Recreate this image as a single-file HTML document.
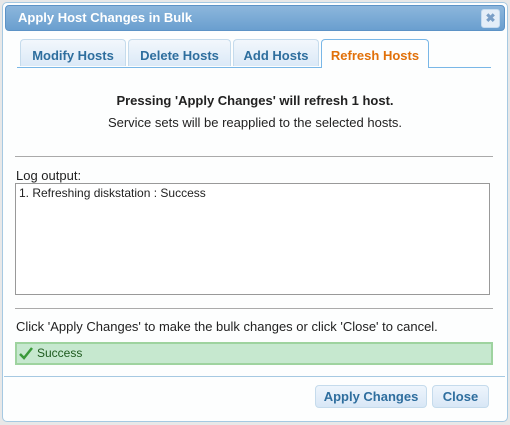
<!DOCTYPE html>
<html><head><style>
body{margin:0;width:510px;height:425px;background:#e8e8e8;font-family:"Liberation Sans",sans-serif;font-size:13px;color:#222;position:relative;overflow:hidden}
.dlg{position:absolute;left:2px;top:2px;width:504px;height:418px;background:#fdfefe;border:1px solid #a6c9e2;border-radius:5px}
.title{position:absolute;left:2px;top:2px;width:498px;height:24px;background:linear-gradient(#8cb6dc,#6a9fcf);border:1px solid #5d93c6;border-radius:4px;color:#fff;font-weight:bold;font-size:13px;line-height:24px;text-indent:12px}
.x{position:absolute;left:475px;top:3px;width:17px;height:17px;background:#e4eef8;border:1px solid #c5dbef;border-radius:3px;color:#7a9fc7;font-size:12px;line-height:17px;text-align:center;text-indent:0;font-weight:bold}
.tab{position:absolute;top:39px;height:27px;border:1px solid #c5dbec;border-bottom:none;border-radius:4px 4px 0 0;background:linear-gradient(#f2f7fc,#dbe9f7);color:#2e6e9e;font-weight:bold;font-size:13px;line-height:31px;text-align:center;box-sizing:border-box}
.tab.on{background:#fdfefe;color:#e17009;border-color:#79b7e7;height:29px}
.tl{position:absolute;left:17px;top:67px;width:474px;height:1px;background:#79b7e7}
.hr{position:absolute;left:15px;width:478px;height:1px;background:#aaa}
.t{position:absolute;white-space:nowrap}
.ta{position:absolute;left:15px;top:183px;width:475px;height:112px;border:1px solid #999;background:#fff;font-size:12px;padding:2px 3px;box-sizing:border-box}
.ok{position:absolute;left:15px;top:342px;width:478px;height:23px;box-sizing:border-box;background:#c6e8cf;border:2px solid #9ed39f;color:#1e5a1e;line-height:19px;text-indent:20px;font-size:12px}
.btn{position:absolute;top:385px;height:23px;box-sizing:border-box;border:1px solid #c5dbec;border-radius:4px;background:linear-gradient(#eef5fc,#d8e7f6);color:#2e6e9e;font-weight:bold;line-height:22px;text-align:center}
</style></head><body>
<div class="dlg">
<div class="title">Apply Host Changes in Bulk<div class="x">✖</div></div>
</div>
<div class="tab" style="left:20px;width:106px">Modify Hosts</div>
<div class="tab" style="left:128px;width:103px">Delete Hosts</div>
<div class="tab" style="left:233px;width:86px">Add Hosts</div>
<div class="tl"></div>
<div class="tab on" style="left:321px;width:108px">Refresh Hosts</div>
<div class="t" style="left:0;width:510px;text-align:center;top:93px;font-weight:bold">Pressing 'Apply Changes' will refresh 1 host.</div>
<div class="t" style="left:0;width:510px;text-align:center;top:115px">Service sets will be reapplied to the selected hosts.</div>
<div class="hr" style="top:156px"></div>
<div class="t" style="left:16px;top:168px">Log output:</div>
<div class="ta">1. Refreshing diskstation : Success</div>
<div class="hr" style="top:308px"></div>
<div class="t" style="left:16px;top:319px">Click 'Apply Changes' to make the bulk changes or click 'Close' to cancel.</div>
<div class="ok">Success<svg style="position:absolute;left:2px;top:3px" width="14" height="13" viewBox="0 0 14 13"><path d="M1 7l4 4 8-10" stroke="#3a9a3a" stroke-width="2.5" fill="none"/></svg></div>
<div style="position:absolute;left:4px;top:376px;width:501px;height:1px;background:#a6c9e2"></div>
<div class="btn" style="left:315px;width:112px">Apply Changes</div>
<div class="btn" style="left:432px;width:57px">Close</div>
</body></html>
